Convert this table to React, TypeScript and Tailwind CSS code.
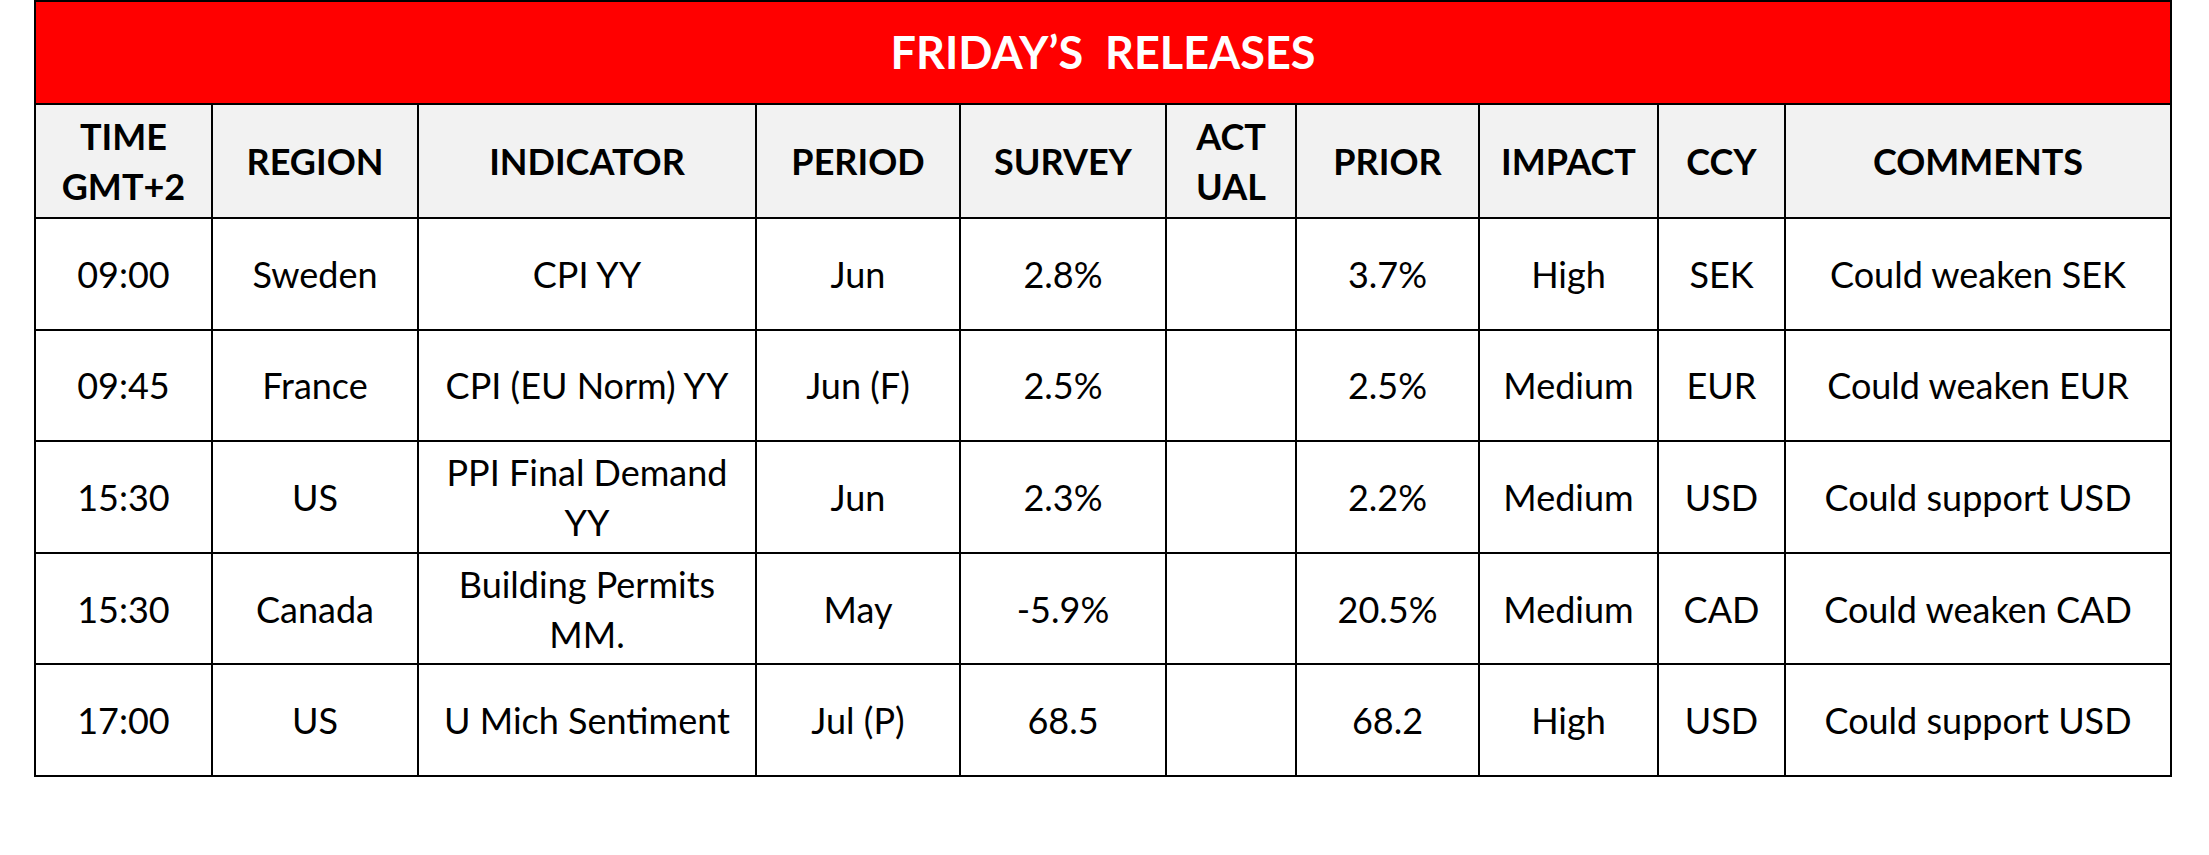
import React from "react";

interface Release {
	time: string;
	region: string;
	indicator: React.ReactNode;
	period: string;
	survey: string;
	actual: string;
	prior: string;
	impact: string;
	ccy: string;
	comment: string;
}

const columns: { label: React.ReactNode; width: string }[] = [
	{ label: <>TIME<br />GMT+2</>, width: "w-[177px]" },
	{ label: "REGION", width: "w-[206px]" },
	{ label: "INDICATOR", width: "w-[338px]" },
	{ label: "PERIOD", width: "w-[204px]" },
	{ label: "SURVEY", width: "w-[206px]" },
	{ label: <>ACT<br />UAL</>, width: "w-[130px]" },
	{ label: "PRIOR", width: "w-[183px]" },
	{ label: "IMPACT", width: "w-[179px]" },
	{ label: "CCY", width: "w-[127px]" },
	{ label: "COMMENTS", width: "w-[386px]" },
];

const releases: Release[] = [
	{ time: "09:00", region: "Sweden", indicator: "CPI YY", period: "Jun", survey: "2.8%", actual: "", prior: "3.7%", impact: "High", ccy: "SEK", comment: "Could weaken SEK" },
	{ time: "09:45", region: "France", indicator: "CPI (EU Norm) YY", period: "Jun (F)", survey: "2.5%", actual: "", prior: "2.5%", impact: "Medium", ccy: "EUR", comment: "Could weaken EUR" },
	{ time: "15:30", region: "US", indicator: <>PPI Final Demand<br />YY</>, period: "Jun", survey: "2.3%", actual: "", prior: "2.2%", impact: "Medium", ccy: "USD", comment: "Could support USD" },
	{ time: "15:30", region: "Canada", indicator: <>Building Permits<br />MM.</>, period: "May", survey: "-5.9%", actual: "", prior: "20.5%", impact: "Medium", ccy: "CAD", comment: "Could weaken CAD" },
	{ time: "17:00", region: "US", indicator: "U Mich Sentiment", period: "Jul (P)", survey: "68.5", actual: "", prior: "68.2", impact: "High", ccy: "USD", comment: "Could support USD" },
];

export default function App() {
	return (
		<div className="w-[2209px] h-[855px] bg-white font-['Lato',sans-serif] text-black">
			<table className="ml-[34px] w-[2136px] table-fixed border-collapse border-2 border-black">
				<colgroup>
					{columns.map((c, i) => (
						<col key={i} className={c.width} />
					))}
				</colgroup>
				<thead>
					<tr className="h-[103px]">
						<th
							colSpan={10}
							className="bg-[#ff0000] border-2 border-black text-white text-[45px] font-bold whitespace-pre text-center"
						>
							{"FRIDAY\u2019S  RELEASES"}
						</th>
					</tr>
					<tr className="h-[114px] bg-[#f2f2f2]">
						{columns.map((c, i) => (
							<th
								key={i}
								className="border-2 border-black text-[36px] leading-[50px] font-bold text-center align-middle"
							>
								{c.label}
							</th>
						))}
					</tr>
				</thead>
				<tbody>
					{releases.map((r, i) => (
						<tr key={i} className="h-[111.6px] text-[36px] leading-[50px] text-center">
							<td className="border-2 border-black">{r.time}</td>
							<td className="border-2 border-black">{r.region}</td>
							<td className="border-2 border-black">{r.indicator}</td>
							<td className="border-2 border-black">{r.period}</td>
							<td className="border-2 border-black">{r.survey}</td>
							<td className="border-2 border-black">{r.actual}</td>
							<td className="border-2 border-black">{r.prior}</td>
							<td className="border-2 border-black">{r.impact}</td>
							<td className="border-2 border-black">{r.ccy}</td>
							<td className="border-2 border-black">{r.comment}</td>
						</tr>
					))}
				</tbody>
			</table>
		</div>
	);
}
